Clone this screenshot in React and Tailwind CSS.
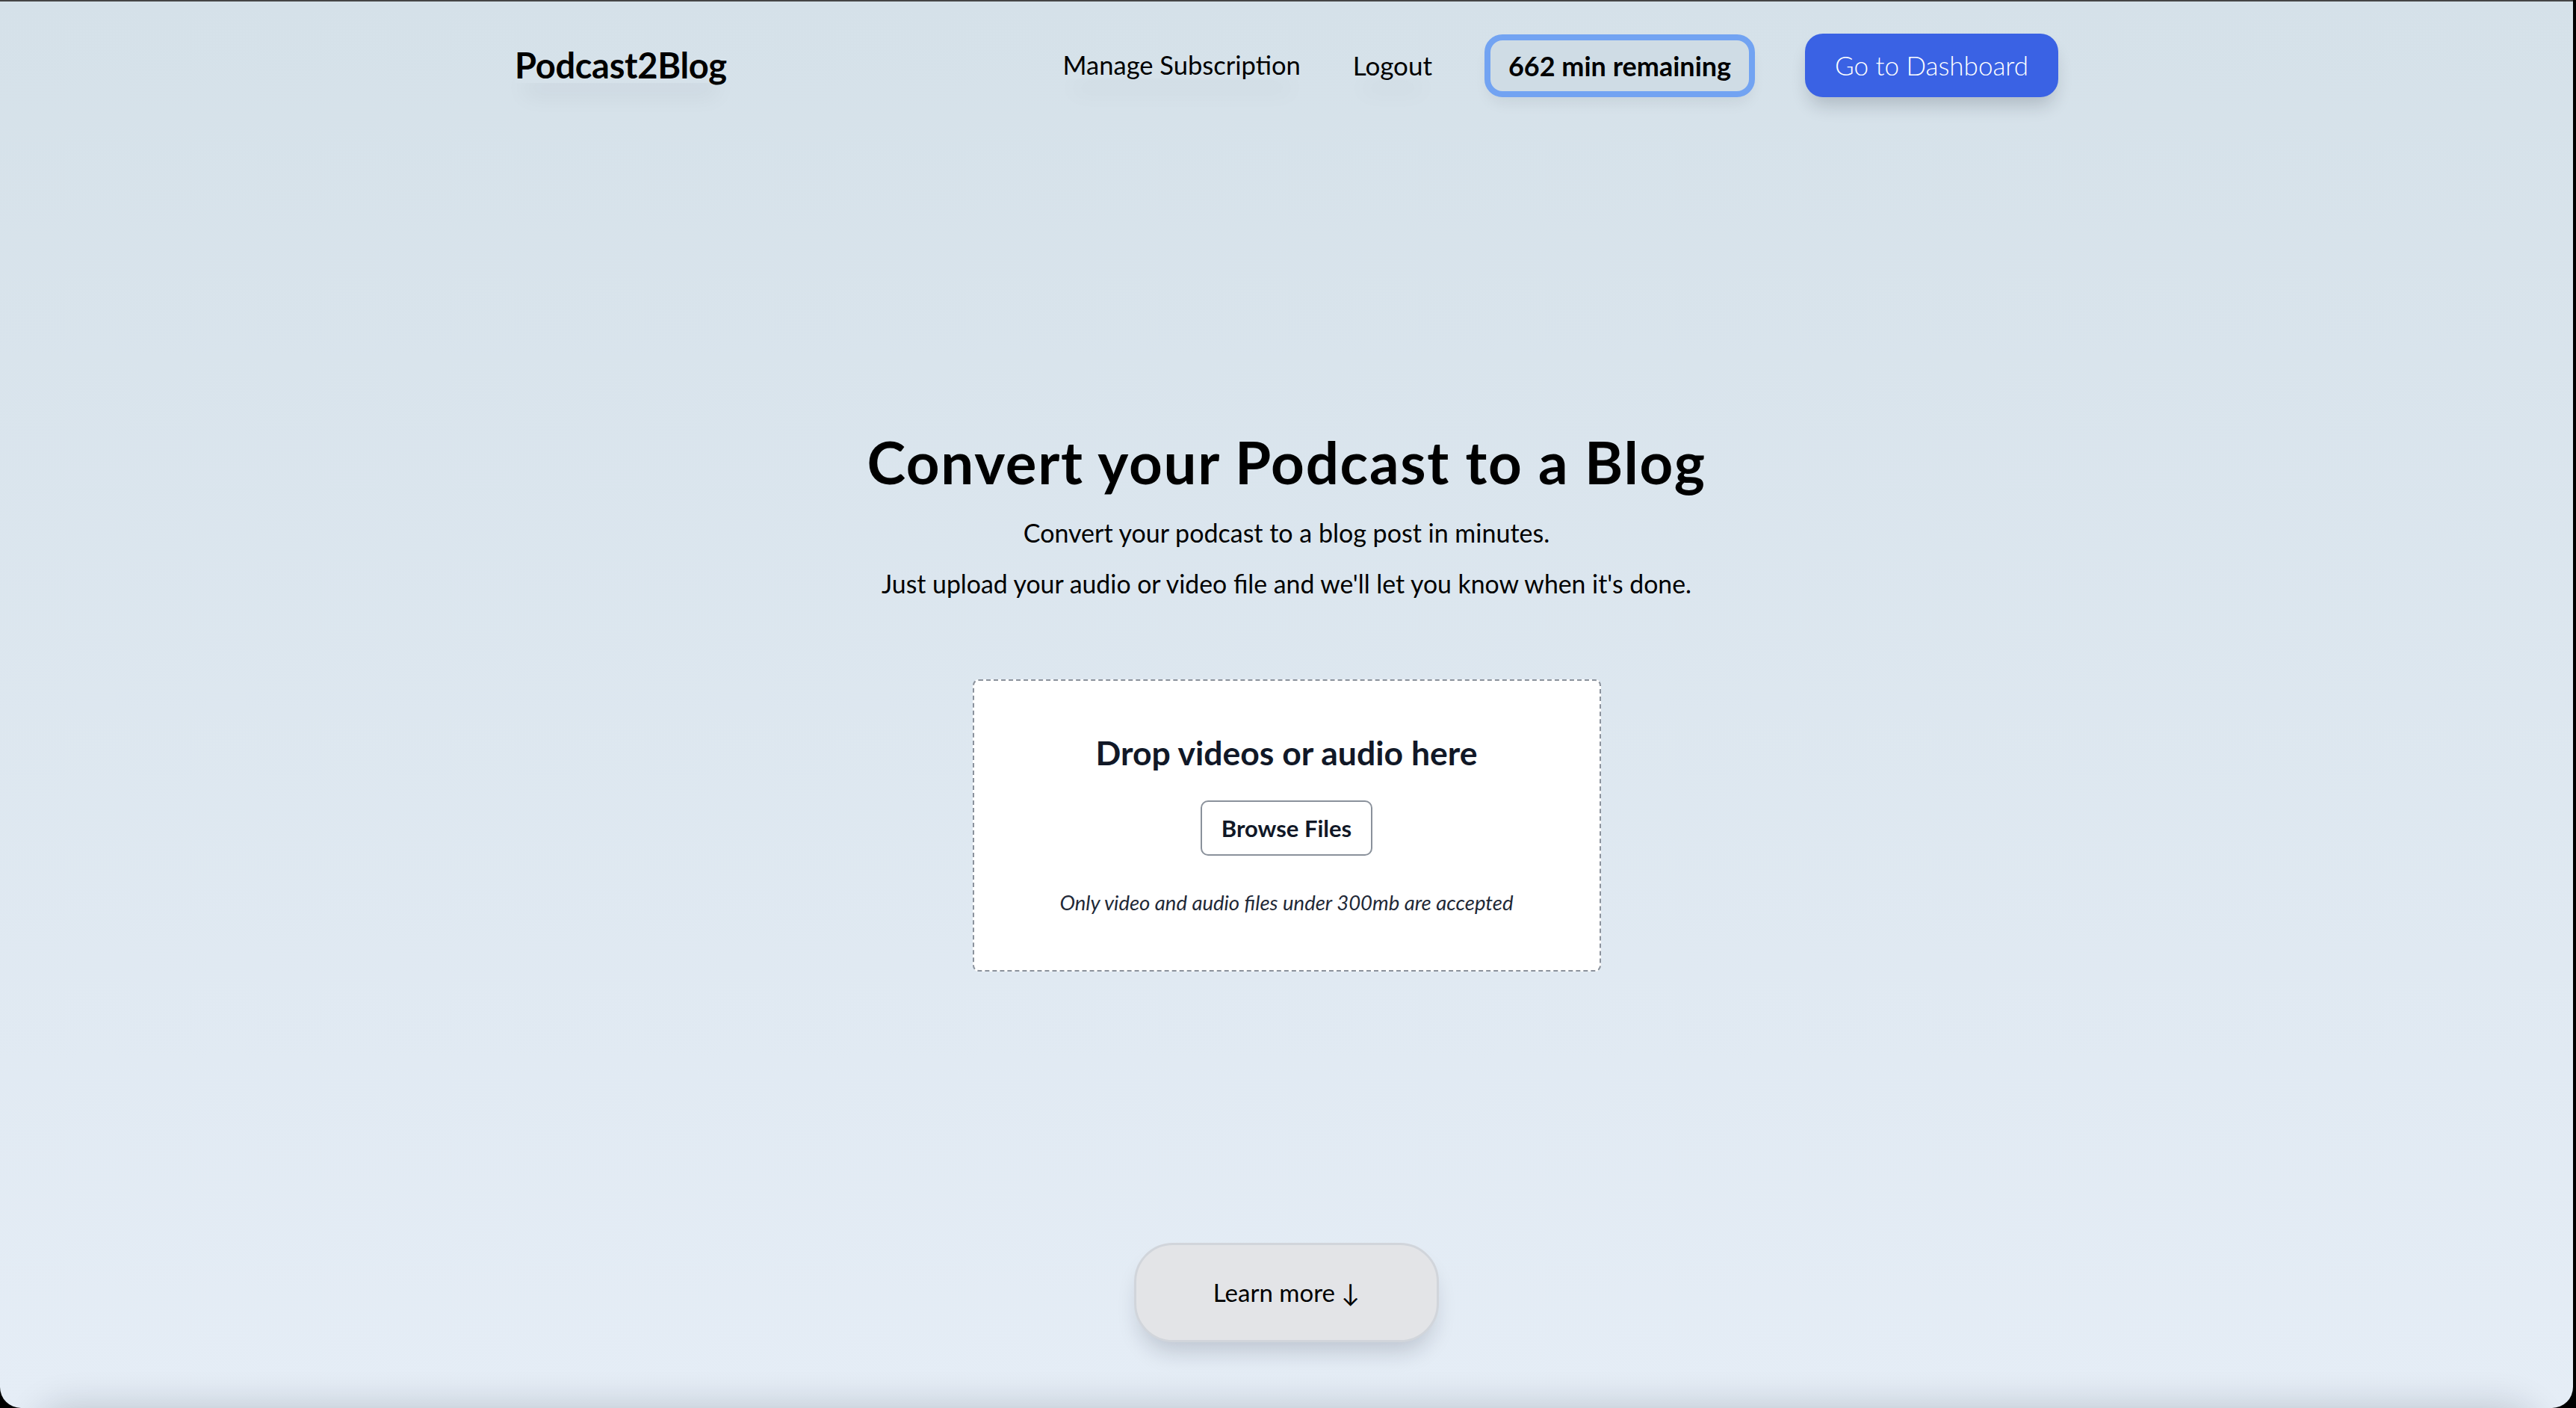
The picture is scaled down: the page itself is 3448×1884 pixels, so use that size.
import React from "react";

const font = { fontFamily: "Lato, 'Open Sans', sans-serif" };

function Header() {
  return (
    <header className="mx-auto flex w-[2066px] items-center justify-between pt-[43px]">
      <div className="text-[47px] font-bold leading-none tracking-[-0.3px] text-black shadow-[0_30px_30px_-12px_rgba(15,23,42,0.05)]">
        Podcast2Blog
      </div>
      <nav className="flex items-center">
        <a className="text-[34.5px] font-normal leading-none text-black shadow-[0_30px_30px_-12px_rgba(15,23,42,0.05)]">
          Manage Subscription
        </a>
        <a className="ml-[70px] text-[35px] font-normal leading-none text-black shadow-[0_30px_30px_-12px_rgba(15,23,42,0.05)]">
          Logout
        </a>
        <div className="ml-[70px] flex h-[84px] w-[362px] items-center justify-center rounded-[24px] border-[8px] border-[#72a3f2] bg-[#cfdce5] text-[36px] font-bold leading-none text-black shadow-[0_12px_20px_-6px_rgba(15,23,42,0.08)]">
          662 min remaining
        </div>
        <button className="ml-[67px] flex h-[85px] w-[339px] items-center justify-center rounded-[24px] bg-[#3a62e4] text-[35px] font-light leading-none text-white shadow-[0_16px_24px_-6px_rgba(15,23,42,0.2)]">
          Go to Dashboard
        </button>
      </nav>
    </header>
  );
}

function DropZone() {
  return (
    <div className="flex h-[391px] w-[841px] flex-col items-center rounded-[8px] border-2 border-dashed border-[#8b929c] bg-white pt-[66px]">
      <h2 className="text-[44.5px] font-bold leading-[60px] text-[#111827]">Drop videos or audio here</h2>
      <button className="mt-[34px] flex h-[74px] w-[230px] items-center justify-center rounded-[10px] border-2 border-[#8a919b] bg-white text-[31px] font-bold leading-none text-[#111827]">
        Browse Files
      </button>
      <p className="mt-[45px] text-[27.5px] font-normal italic leading-[36px] text-[#1f2937]">
        Only video and audio files under 300mb are accepted
      </p>
    </div>
  );
}

export default function App() {
  return (
    <div style={font} className="h-[1884px] w-full overflow-hidden bg-black">
      <div className="relative mr-[4px] flex h-full flex-col overflow-hidden rounded-b-[28px] border-t-2 border-[#454545] bg-gradient-to-b from-[#d5e1e9] to-[#e5edf6]">
        <div className="flex h-[1882px] shrink-0 flex-col">
          <Header />
          <main className="flex flex-col items-center">
            <h1 className="mt-[449px] text-[78px] font-bold leading-none tracking-[1.7px] text-black">
              Convert your Podcast to a Blog
            </h1>
            <p className="mt-[32px] text-[34px] leading-[48px] text-black">
              Convert your podcast to a blog post in minutes.
            </p>
            <p className="mt-[20px] text-[33.8px] leading-[48px] text-black">
              Just upload your audio or video file and we'll let you know when it's done.
            </p>
            <div className="mt-[104px]">
              <DropZone />
            </div>
            <button className="mt-[363px] flex h-[133px] w-[408px] items-center justify-center rounded-[52px] border-[3px] border-[#d1d5db] bg-[#e3e4e7] text-[33px] leading-none text-black shadow-[0_20px_30px_-8px_rgba(15,23,42,0.18)]">
              Learn more ↓
            </button>
          </main>
        </div>
        <section className="mx-[50px] h-[400px] shrink-0 rounded-[40px] bg-[#e5edf6] shadow-[0_0_50px_rgba(15,23,42,0.2)]" />
      </div>
    </div>
  );
}
